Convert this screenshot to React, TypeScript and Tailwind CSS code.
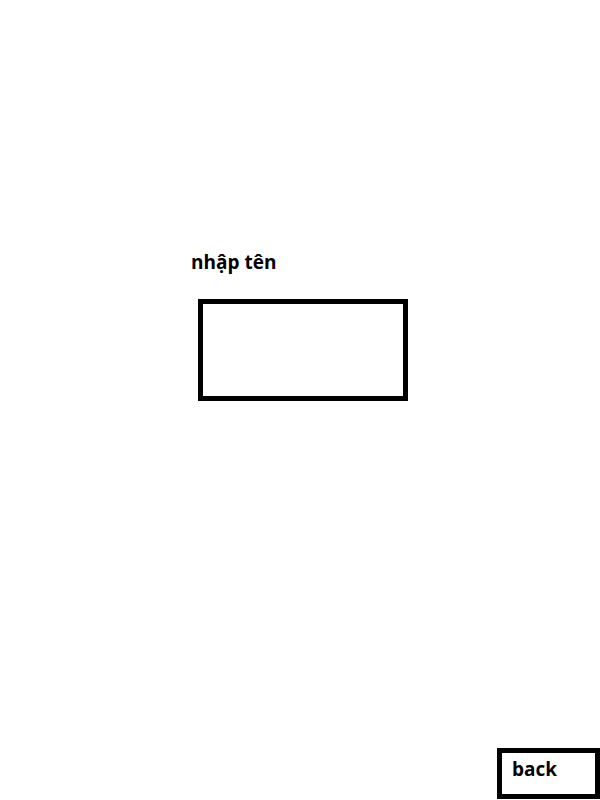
import React from "react";

export default function App() {
  return (
    <div className="flex h-[800px] w-[600px] flex-col bg-white font-['Open_Sans',sans-serif] text-black">
      <div className="ml-[191px] mt-[249px]">
        <label htmlFor="name" className="block text-[19px] font-bold leading-[27px]">
          nhập tên
        </label>
      </div>
      <input
        id="name"
        type="text"
        className="ml-[198px] mt-[23px] h-[102px] w-[210px] border-[5px] border-black bg-white outline-none"
      />
      <button className="mt-auto mb-[1px] self-end flex h-[51px] w-[103px] items-start border-[5px] border-black bg-white pl-[10px] pt-[3px] text-[19px] font-bold leading-[27px]">
        back
      </button>
    </div>
  );
}
